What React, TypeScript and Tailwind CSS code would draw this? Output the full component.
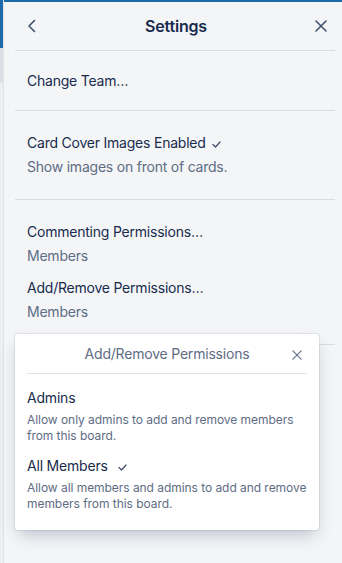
const FONT = "font-['Inter','Noto_Sans',sans-serif]";

function Chevron() {
  return (
    <svg width="10" height="14" viewBox="0 0 10 14" fill="none">
      <path d="M7.5 1.5L2 7l5.5 5.5" stroke="#42526e" strokeWidth="1.6" strokeLinecap="round" strokeLinejoin="round" />
    </svg>
  );
}

function Cross({ size = 12, color = "#42526e", stroke = 1.6 }: { size?: number; color?: string; stroke?: number }) {
  return (
    <svg width={size} height={size} viewBox="0 0 12 12" fill="none">
      <path d="M1 1l10 10M11 1L1 11" stroke={color} strokeWidth={stroke} strokeLinecap="round" />
    </svg>
  );
}

function Check() {
  return (
    <svg width="9" height="7" viewBox="0 0 9 7" fill="none" className="ml-[6px] mt-[2px]">
      <path d="M1 3.5l2.5 2.5L8 1" stroke="#42526e" strokeWidth="1.3" strokeLinecap="round" strokeLinejoin="round" />
    </svg>
  );
}

export default function App() {
  return (
    <div className={`relative flex h-[563px] w-[342px] overflow-hidden bg-[#f4f5f7] ${FONT}`}>
      {/* board edge peeking out on the left */}
      <div className="flex w-[3px] flex-col">
        <div className="h-[48px] bg-[#1f6aa8]" />
        <div className="h-[35px] bg-[#dcdfe4]" />
        <div className="flex-1 bg-[#eceef1]" />
      </div>

      <div className="flex flex-1 flex-col border-l border-[#e2e4e9]">
        <div className="h-[2px] bg-[#1f6aa8]" />

        {/* header */}
        <div className="flex h-[48px] items-center justify-between pl-[23px] pr-[15px]">
          <Chevron />
          <span className="text-[16px] font-semibold tracking-[-0.2px] text-[#172b4d]">Settings</span>
          <Cross />
        </div>
        <div className="ml-[11px] mr-[7px] h-px bg-[#d9dce2]" />

        <div className="pl-[23px] pt-[20px] pb-[19px] text-[14px] leading-5 tracking-[-0.22px] text-[#172b4d]">Change Team…</div>
        <div className="ml-[11px] mr-[7px] h-px bg-[#d9dce2]" />

        <div className="pl-[23px] py-[22px] text-[14px] leading-5 tracking-[-0.22px]">
          <div className="flex items-center text-[#172b4d]">
            Card Cover Images Enabled
            <Check />
          </div>
          <div className="mt-1 text-[#5e6c84]">Show images on front of cards.</div>
        </div>
        <div className="ml-[11px] mr-[7px] h-px bg-[#d9dce2]" />

        <div className="pl-[23px] py-[22px] text-[14px] leading-5 tracking-[-0.22px]">
          <div className="text-[#172b4d]">Commenting Permissions…</div>
          <div className="mt-1 text-[#5e6c84]">Members</div>
          <div className="mt-3 text-[#172b4d]">Add/Remove Permissions…</div>
          <div className="mt-1 text-[#5e6c84]">Members</div>
        </div>
        <div className="ml-[11px] mr-[7px] h-px bg-[#d9dce2]" />
      </div>

      {/* popover */}
      <div className="absolute left-[15px] top-[334px] w-[304px] rounded-[3px] bg-white px-3 pb-[18px] shadow-[0_8px_16px_-4px_rgba(9,30,66,0.25),0_0_0_1px_rgba(9,30,66,0.08)]">
        <div className="relative flex h-[40px] items-center justify-center border-b border-[#dfe1e6]">
          <span className="text-[14px] tracking-[-0.2px] text-[#5e6c84]">Add/Remove Permissions</span>
          <div className="absolute right-[5px] top-[16px]">
            <Cross size={10} color="#6b778c" stroke={1.5} />
          </div>
        </div>

        <div className="pt-[14px]">
          <div className="text-[14px] leading-5 tracking-[-0.2px] text-[#172b4d]">Admins</div>
          <div className="mt-1 whitespace-nowrap text-[12px] leading-4 tracking-[-0.05px] text-[#5e6c84]">
            Allow only admins to add and remove members
            <br />
            from this board.
          </div>

          <div className="mt-3 flex items-center text-[14px] leading-5 tracking-[-0.2px] text-[#172b4d]">
            All Members
            <span className="ml-[4px]">
              <Check />
            </span>
          </div>
          <div className="mt-1 whitespace-nowrap text-[12px] leading-4 tracking-[-0.05px] text-[#5e6c84]">
            Allow all members and admins to add and remove
            <br />
            members from this board.
          </div>
        </div>
      </div>
    </div>
  );
}
